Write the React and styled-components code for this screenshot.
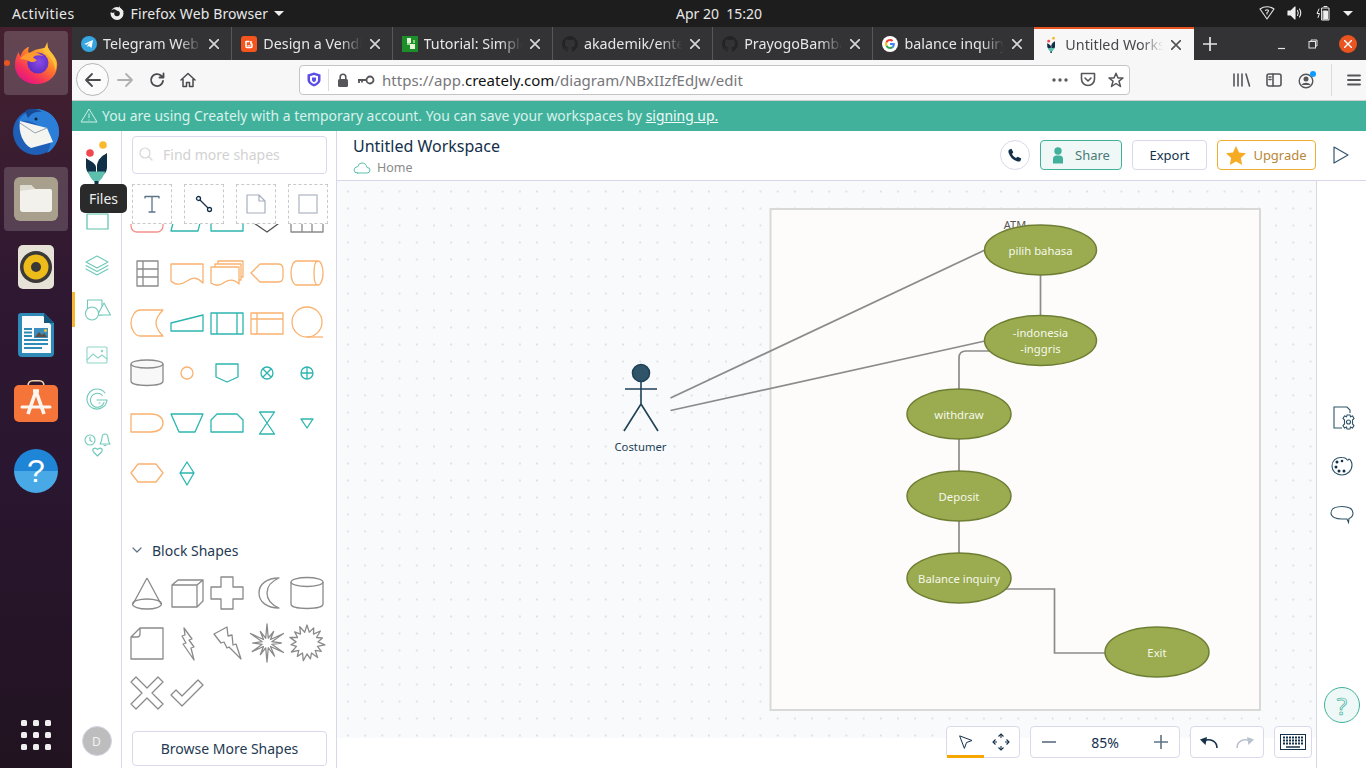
import React from "react";
import styled, { createGlobalStyle } from "styled-components";

const Global = createGlobalStyle`
  html, body { margin: 0; padding: 0; overflow: hidden; background: #fff; }
  * { box-sizing: border-box; }
  body { font-family: "Noto Sans", "Open Sans", sans-serif; }
  #root { width: 1366px; height: 768px; }
`;

const Screen = styled.div`width:1366px;height:768px;display:flex;flex-direction:column;overflow:hidden;position:relative;`;
const TopBar = styled.header`height:27px;flex:none;background:#1d1d1d;color:#e8e8e8;font-size:14px;display:flex;align-items:center;padding-bottom:1px;`;
const TopLeft = styled.div`flex:0 0 676px;display:flex;align-items:center;padding-left:12px;`;
const Activities = styled.span`letter-spacing:.42px;`;
const AppMenu = styled.div`display:flex;align-items:center;gap:6px;margin-left:34px;letter-spacing:.12px;`;
const Clock = styled.div`white-space:pre;`;
const Tray = styled.div`margin-left:auto;display:flex;align-items:center;gap:12px;padding-right:13px;`;
const Caret = styled.span`width:0;height:0;border-left:5px solid transparent;border-right:5px solid transparent;border-top:5px solid #eee;display:inline-block;margin-left:${p=>p.$gap||0}px;`;

const Body = styled.div`flex:1;display:flex;min-height:0;`;
const Dock = styled.nav`width:72px;flex:none;background:linear-gradient(180deg,#45212f 0%,#2f1831 35%,#2a1630 60%,#211320 100%);display:flex;flex-direction:column;align-items:center;padding-top:4px;`;
const DockItem = styled.div`width:64px;height:64px;margin-bottom:4px;border-radius:4px;display:flex;align-items:center;justify-content:center;position:relative;background:${p=>p.$active?"rgba(255,255,255,.17)":"transparent"};`;
const RunDot = styled.span`position:absolute;left:0;top:29px;width:6px;height:6px;margin-left:0;border-radius:50%;background:#e95420;`;
const HelpBall = styled.div`width:44px;height:44px;border-radius:50%;background:linear-gradient(180deg,#1f85d6 0,#1f85d6 50%,#48a9e6 50%,#48a9e6 100%);color:#fff;font-size:32px;line-height:44px;text-align:center;font-family:"Liberation Sans",sans-serif;`;
const AppGrid = styled.div`margin-top:auto;margin-bottom:18px;display:grid;grid-template-columns:repeat(3,6px);gap:6px;`;
const AppDot = styled.span`width:6px;height:6px;border-radius:1.5px;background:#f0eeee;`;

const Browser = styled.div`flex:1;display:flex;flex-direction:column;min-width:0;`;
const TabBar = styled.div`height:33px;flex:none;background:#333234;display:flex;align-items:stretch;color:#e7e7e7;`;
const Tab = styled.div`flex:0 0 160.3px;min-width:0;display:flex;align-items:center;padding:0 ${p=>p.$active?"13px":"12px"} 0 ${p=>p.$active?"11px":"9px"};font-size:14.3px;background:${p=>p.$active?"#f7f7f7":"transparent"};color:${p=>p.$active?"#48484c":"#e7e7e7"};border-top:${p=>p.$active?"2px solid #e95420":"none"};border-right:${p=>p.$active||p.$last?"none":"1px solid #58585a"};`;
const TabTitle = styled.span`flex:1;min-width:0;margin:0 8px 0 ${p=>p.$active?"8px":"6px"};overflow:hidden;white-space:nowrap;-webkit-mask-image:linear-gradient(90deg,#000 78%,transparent 100%);mask-image:linear-gradient(90deg,#000 78%,transparent 100%);`;
const Plus = styled.div`width:32px;display:flex;align-items:center;justify-content:center;`;
const WinBtns = styled.div`margin-left:auto;display:flex;align-items:center;gap:20px;padding-right:9px;`;
const CloseWin = styled.div`width:18px;height:18px;border-radius:50%;background:#e95420;display:flex;align-items:center;justify-content:center;`;

const NavBar = styled.div`height:41px;flex:none;background:#f7f7f7;border-bottom:1px solid #cfcfd0;display:flex;align-items:center;padding-left:4px;padding-bottom:1px;`;
const BackBtn = styled.div`width:33px;height:33px;border-radius:50%;border:1px solid #b5b5b5;background:#fbfbfb;display:flex;align-items:center;justify-content:center;`;
const NavIcon = styled.div`width:${p=>p.$w||32}px;flex:none;display:flex;align-items:center;justify-content:center;`;
const UrlBox = styled.div`width:831px;height:30px;margin-left:96px;background:#fff;border:1px solid #c5c5c7;border-radius:4px;display:flex;align-items:center;font-size:15px;color:#77777b;`;
const UrlSep = styled.span`width:1px;height:22px;background:#dddddf;margin:0 7px 0 0;`;
const UrlText = styled.div`margin-left:7px;white-space:nowrap;letter-spacing:.03px;`;
const UrlStrong = styled.span`color:#111;`;
const UrlEnd = styled.div`margin-left:auto;display:flex;align-items:center;gap:12px;padding-right:5px;`;
const ToolSet = styled.div`display:flex;align-items:center;margin-left:101px;gap:15px;`;
const ToolSep = styled.span`width:1px;height:32px;background:#dcdcdc;margin:0 0 0 -1px;`;

const Banner = styled.div`height:30px;flex:none;background:#41b19c;color:#d9f2ec;font-size:13.9px;display:flex;align-items:center;padding:0 0 1px 8px;gap:4px;`;
const SignLink = styled.span`text-decoration:underline;color:#eefaf7;`;

const AppArea = styled.div`flex:1;display:flex;min-height:0;background:#fff;position:relative;`;
const Rail = styled.aside`width:50px;flex:none;border-right:1px solid #d7d7e9;display:flex;flex-direction:column;align-items:center;position:relative;`;
const RailLogo = styled.div`height:66px;flex:none;padding-top:8px;display:flex;justify-content:center;align-items:flex-start;`;
const RailItem = styled.div`height:45px;width:100%;flex:none;display:flex;align-items:center;justify-content:center;position:relative;${p=>p.$active?"&::before{content:'';position:absolute;left:0;top:5px;bottom:5px;width:3px;background:#f7b733;}":""}`;
const Avatar = styled.div`margin-top:auto;margin-bottom:12px;width:30px;height:30px;border-radius:50%;background:#bdbdbd;border:1px solid #d5d5e5;color:#f3f3f3;font-size:12px;display:flex;align-items:center;justify-content:center;`;
const Tooltip = styled.div`position:absolute;left:8px;top:53px;width:47px;height:29px;border-radius:5px;background:#2a2a2a;color:#eee;font-size:14px;display:flex;align-items:center;justify-content:center;z-index:5;`;

const Panel = styled.aside`width:215px;flex:none;border-right:1px solid #d7d7e9;display:flex;flex-direction:column;padding-top:5px;`;
const SearchBox = styled.div`margin:0 9px 0 10px;height:38px;flex:none;border:1px solid #d9d9eb;border-radius:4px;display:flex;align-items:center;padding:0 0 2px 6px;gap:10px;color:#d2d2d2;font-size:14px;`;
const ToolRow = styled.div`margin:10px 0 0 10px;display:flex;gap:12px;flex:none;`;
const ToolBox = styled.div`width:40px;height:40px;border:1px dashed #c9c9c9;background:#fff;display:flex;align-items:center;justify-content:center;`;
const Scroller = styled.div`height:316px;flex:none;overflow:hidden;`;
const ShapeGrid = styled.div`display:grid;grid-template-columns:repeat(5,40px);grid-auto-rows:50px;padding-left:5px;margin-top:${p=>p.$offset||0}px;`;
const ShapeCell = styled.div`display:flex;align-items:center;justify-content:center;`;
const SectionHead = styled.div`height:22px;flex:none;display:flex;align-items:center;gap:10px;padding:0 0 2px 10px;font-size:14px;color:#1f3a52;`;
const BlockWrap = styled.div`margin-top:6px;height:150px;flex:none;`;
const Browse = styled.div`margin:13px 9px 0 10px;height:35px;flex:none;border:1px solid #d9d9eb;border-radius:4px;display:flex;align-items:center;justify-content:center;font-size:14px;color:#1f3a52;`;

const Main = styled.main`flex:1;display:flex;flex-direction:column;min-width:0;`;
const Header = styled.div`height:50px;flex:none;border-bottom:1px solid #d7d7e9;display:flex;align-items:center;padding:0 17px 1px 16px;`;
const TitleBlock = styled.div`display:flex;flex-direction:column;`;
const Title = styled.div`font-size:16px;line-height:22px;color:#14304a;margin-top:-1px;`;
const Crumb = styled.div`font-size:12.5px;line-height:18px;margin-top:2px;margin-bottom:-3px;color:#8a8a8a;display:flex;align-items:center;gap:6px;`;
const Actions = styled.div`margin-left:auto;display:flex;align-items:center;gap:10px;`;
const PhoneBtn = styled.div`width:30px;height:30px;border-radius:50%;border:1px solid #d9d9eb;display:flex;align-items:center;justify-content:center;`;
const HeadBtn = styled.div`height:30px;width:${p=>p.$w}px;border-radius:4px;border:1px solid ${p=>p.$border||"#d9d9eb"};background:${p=>p.$bg||"#fff"};color:${p=>p.$color||"#14304a"};font-size:13px;display:flex;align-items:center;justify-content:center;gap:${p=>p.$gap||0}px;`;
const PlayBtn = styled.div`margin-left:17px;display:flex;`;

const Work = styled.div`flex:1;display:flex;min-height:0;`;
const CanvasCol = styled.div`flex:1;position:relative;min-width:0;background:#fff;`;
const Canvas = styled.div`position:absolute;left:0;right:0;top:0;height:557px;background-color:#f9fafc;background-image:radial-gradient(circle,#dfe1ea 0.9px,transparent 1.3px);background-size:17.2px 17px;background-position:2.4px 2px;overflow:hidden;`;
const Floating = styled.div`position:absolute;right:4px;bottom:10px;display:flex;gap:10px;`;
const FloatGroup = styled.div`height:32px;width:${p=>p.$w}px;background:#fff;border:1px solid #d9d9eb;border-radius:4px;display:flex;align-items:center;justify-content:${p=>p.$spread?"space-between":"space-around"};padding:0 ${p=>p.$spread?"11px":"0"} 0 ${p=>p.$spread?"11px":`${p.$pl||0}px`};position:relative;font-size:14px;color:#14304a;`;
const ActiveMark = styled.span`position:absolute;left:0;bottom:-1px;width:37px;height:3px;background:#f7a600;`;
const RightRail = styled.aside`width:50px;flex:none;border-left:1px solid #d7d7e9;background:#fff;display:flex;flex-direction:column;align-items:center;padding-top:212px;position:relative;`;
const RightIcon = styled.div`height:${p=>p.$h||49}px;flex:none;display:flex;align-items:center;justify-content:center;margin-left:${p=>p.$shift||0}px;`;
const HelpFab = styled.div`position:absolute;left:7px;bottom:45px;width:36px;height:36px;border-radius:50%;border:1px solid #41b19c;background:#eef8f6;color:#eef8f6;-webkit-text-stroke:.7px #41b19c;display:flex;align-items:center;justify-content:center;font-size:24px;`;

const OR = "#f9b26f", TE = "#2cb5ae", GR = "#8a8a8a";
const Sh = ({ c = GR, sw = 1.3, fill = "none", children }) => (
  <svg width="40" height="40" viewBox="0 0 40 40" fill={fill} stroke={c} strokeWidth={sw} strokeLinejoin="round">{children}</svg>
);
const P = ({ d }) => <path d={d} />;
const star = (n, R, r, jitter = []) => {
  const out = [];
  for (let i = 0; i < n * 2; i++) {
    const a = (Math.PI * i) / n - Math.PI / 2;
    const rad = i % 2 === 0 ? R * (jitter[(i / 2) % jitter.length] || 1) : r;
    out.push(`${(20 + Math.cos(a) * rad).toFixed(1)},${(20 + Math.sin(a) * rad).toFixed(1)}`);
  }
  return out.join(" ");
};

const flowShapes = [
  <Sh c="#f2908a"><rect x="4" y="6" width="32" height="23" rx="6" /></Sh>,
  <Sh c={TE}><P d="M9 8H36L31 28H4Z" /></Sh>,
  <Sh c={TE}><rect x="4" y="8" width="32" height="20" /></Sh>,
  <Sh c="#555"><P d="M4 18L20 29L35 18" /></Sh>,
  <Sh c={GR}><P d="M4 6H36V29H4ZM15 6V29M25 6V29" /></Sh>,

  <Sh c={GR}><P d="M10 8H31V33H10ZM10 16H31M10 24H31M16 8V33" /></Sh>,
  <Sh c={OR}><P d="M4 11H36V30C30 24 26 24 20 28C14 32 8 32 4 28Z" /></Sh>,
  <Sh c={OR}><P d="M4 14H32V31C27 26 23 26 18 29C13 33 8 33 4 30ZM8 14V11H34V27H32M11 11V8H36V24H34" /></Sh>,
  <Sh c={OR}><P d="M4 20L13 11H31Q36 11 36 16V24Q36 29 31 29H13Z" /></Sh>,
  <Sh c={OR}><P d="M31 8H10C6 8 4 14 4 20C4 26 6 32 10 32H31M31 8C34 8 36 14 36 20C36 26 34 32 31 32C28 32 27 26 27 20C27 14 28 8 31 8" /></Sh>,

  <Sh c={OR}><P d="M13 7H36C31 12 29 16 29 20C29 24 31 28 36 33H13C8 33 4 26 4 20C4 14 8 7 13 7Z" /></Sh>,
  <Sh c={TE}><P d="M4 20L36 12V28H4Z" /></Sh>,
  <Sh c={TE}><P d="M4 10H36V31H4ZM10 10V31M30 10V31" /></Sh>,
  <Sh c={OR}><P d="M4 10H36V31H4ZM10 10V31M4 16H36" /></Sh>,
  <Sh c={OR}><circle cx="20" cy="19" r="15" /><P d="M20 34H36" /></Sh>,

  <Sh c={GR} fill="#f8f8f8"><P d="M4 11V28C4 34 36 34 36 28V11" /><ellipse cx="20" cy="11" rx="16" ry="4" /></Sh>,
  <Sh c={OR}><circle cx="20" cy="20" r="6" /></Sh>,
  <Sh c={TE}><P d="M9 11H31V24L20 29L9 24Z" /></Sh>,
  <Sh c={TE}><circle cx="20" cy="20" r="6" /><P d="M16 16L24 24M24 16L16 24" /></Sh>,
  <Sh c={TE}><circle cx="20" cy="20" r="6" /><P d="M14 20H26M20 14V26" /></Sh>,

  <Sh c={OR}><P d="M4 11H24C32 11 36 15 36 20C36 25 32 29 24 29H4Z" /></Sh>,
  <Sh c={TE}><P d="M4 11H36L28 29H12Z" /></Sh>,
  <Sh c={TE}><P d="M10 11H30L36 17V29H4V17Z" /></Sh>,
  <Sh c={TE}><P d="M12.5 9H27.5L12.5 31H27.5Z" /></Sh>,
  <Sh c={TE}><P d="M14 16H26L20 25Z" /></Sh>,

  <Sh c={OR}><P d="M11 11H29L36 20L29 29H11L4 20Z" /></Sh>,
  <Sh c={TE}><P d="M20 9L27 20L20 32L13 20ZM13 20H27" /></Sh>,
];

const blockShapes = [
  <Sh><P d="M20 5L6 31M20 5L34 31" /><ellipse cx="20" cy="31" rx="14.5" ry="5" /></Sh>,
  <Sh><P d="M5 12H30V34H5ZM5 12L11 7H36L30 12M36 7V28L30 34" /></Sh>,
  <Sh><P d="M14 4H26V14H36V26H26V36H14V26H4V14H14Z" /></Sh>,
  <Sh><P d="M32 5C20 5 12 11 12 20C12 29 20 35 32 35C25 32 20 27 20 20C20 13 25 8 32 5Z" /></Sh>,
  <Sh><ellipse cx="20" cy="9" rx="16" ry="4.5" /><P d="M4 9V31C4 37 36 37 36 31V9" /></Sh>,
  <Sh><P d="M13 5H36V36H4V14ZM4 14H10Q13 14 13 11V5" /></Sh>,
  <Sh><P d="M17 5L25 16L22 17L27 24L24 25L27 37L16 21L19 20L15 13L18 12Z" /></Sh>,
  <Sh><P d="M7 11L20 4L21 13L25 12L26 22L29 21L34 36L22 24L20 25L17 19L14 20Z" /></Sh>,
  <Sh><polygon points={star(12, 19, 5, [1, .7, 1, .75, 1, .8, 1, .7, .9, .75, 1, .7])} /></Sh>,
  <Sh><polygon points={star(15, 18, 11, [1, .92, 1, .9])} /></Sh>,
  <Sh><P d="M9 4L20 15L31 4L36 9L25 20L36 31L31 36L20 25L9 36L4 31L15 20L4 9Z" /></Sh>,
  <Sh><P d="M4 22L9 17L15 23L31 7L36 12L15 33Z" /></Sh>,
];

const Firefox = () => (
  <svg width="46" height="46" viewBox="0 0 48 48">
    <defs>
      <linearGradient id="ffa" x1=".8" y1=".1" x2=".2" y2=".95">
        <stop offset="0" stopColor="#ffd43a" /><stop offset=".4" stopColor="#ff7a2a" /><stop offset=".75" stopColor="#f5305c" /><stop offset="1" stopColor="#e31587" />
      </linearGradient>
      <radialGradient id="ffb" cx=".55" cy=".45" r=".6"><stop offset="0" stopColor="#8a4ae8" /><stop offset="1" stopColor="#5b2bc0" /></radialGradient>
    </defs>
    <path d="M36 2C35 7 37 9 40 13C44 18 47 22 46 28C45 39 36 46 25 46C12 46 2 37 2 26C2 20 4 16 6 12C6 15 7 16 8 17C9 12 13 8 17 7C15 11 16 13 17 14C22 9 31 9 33 8C35 7 35.5 4 36 2Z" fill="url(#ffa)" />
    <circle cx="26" cy="24" r="11" fill="url(#ffb)" />
    <path d="M7 20C11 15 15 13 19 13C23 12 28 14 32 17C27 15 23 16 21 18C22 20 24 20 25 21C21 24 18 23 15 21C12 20 9 20 7 20Z" fill="#ff9a2e" />
    <path d="M36 2C35 8 39 12 42 16C45 21 46 26 44 32C44 25 40 18 34 14C31 12 33 8 36 2Z" fill="#ffc13a" />
  </svg>
);
const Thunderbird = () => (
  <svg width="50" height="50" viewBox="0 0 50 50">
    <circle cx="25" cy="26" r="23" fill="#1f5fb8" />
    <path d="M7 16C12 6 24 0 34 5C43 8 49 18 48 28C47 36 42 44 36 47C40 40 40 36 38 30L28 20C20 14 13 14 7 16Z" fill="#2b7fd8" />
    <path d="M9 15L36 22L42 36L20 42C12 38 7 26 9 15Z" fill="#f4f4f0" />
    <path d="M9 17L24 27L36 22" fill="none" stroke="#9aa3ab" strokeWidth="1" />
    <path d="M14 5C18 2 25 2 31 6C24 5 20 8 17 12Z" fill="#174a94" />
    <circle cx="25" cy="13" r="1.5" fill="#123" />
  </svg>
);
const FilesIcon = () => (
  <svg width="46" height="46" viewBox="0 0 46 46">
    <rect x="1" y="1" width="44" height="44" rx="6" fill="#a8a08c" />
    <path d="M7 11Q7 9 9 9H18L22 13H37Q39 13 39 15V33Q39 36 36 36H10Q7 36 7 33Z" fill="#f3f1ec" />
    <path d="M7 15V11Q7 9 9 9H18L22 13Z" fill="#dedbd1" />
  </svg>
);
const Rhythm = () => (
  <svg width="38" height="46" viewBox="0 0 38 46">
    <rect x="1" y="1" width="36" height="44" rx="5" fill="#e6e2d7" />
    <circle cx="19" cy="23" r="16" fill="#3c3a38" />
    <circle cx="19" cy="23" r="12.5" fill="#edbb1a" />
    <circle cx="19" cy="23" r="5" fill="#3a3836" />
  </svg>
);
const Writer = () => (
  <svg width="38" height="46" viewBox="0 0 38 46">
    <path d="M4 1H27L37 11V41Q37 45 33 45H5Q1 45 1 41V4Q1 1 4 1Z" fill="#2f8ab8" />
    <path d="M5 4H26L34 13V41H5Z" fill="#fbfcfd" />
    <path d="M27 1L37 11H27Z" fill="#15587e" />
    <path d="M7 17H15M7 20.5H15M7 24H15M7 28H31M7 32H31M7 36H25" stroke="#2f8ab8" strokeWidth="1.8" />
    <rect x="17" y="16" width="14" height="10" fill="#3a8dbd" />
    <path d="M18 25L22 20L25 23L27 21L30 25Z" fill="#5a4e45" />
    <circle cx="28.5" cy="18.5" r="1.5" fill="#f4c430" />
  </svg>
);
const SoftwareIcon = () => (
  <svg width="46" height="46" viewBox="0 0 46 46">
    <path d="M15 6Q15 .8 20 .8H26Q31 .8 31 6" fill="none" stroke="#f0d0a8" strokeWidth="1.6" />
    <rect x="1" y="5" width="44" height="37" rx="5" fill="#f4743a" />
    <path d="M23 11L15 34M23 11L31 34M20 11H26" stroke="#fdf5f0" strokeWidth="3.6" fill="none" />
    <path d="M9 27H37" stroke="#fdf5f0" strokeWidth="3" strokeLinecap="round" />
  </svg>
);
const Telegram = () => (
  <svg width="16" height="16" viewBox="0 0 16 16" style={{ flex: "none" }}><circle cx="8" cy="8" r="8" fill="#37a5e0" /><path d="M3 8L12 4L10.5 12L8 10L6.5 11L6.5 9L10 6L5.5 8.8Z" fill="#fff" /></svg>
);
const Blogger = () => (
  <svg width="16" height="16" viewBox="0 0 16 16" style={{ flex: "none" }}><rect width="16" height="16" rx="3" fill="#f4541d" /><path d="M5 5.5H8.5M5 5V10.5Q5 11.5 6 11.5H10Q11 11.5 11 10.5V8.5Q11 7.5 10 7.5V5" stroke="#fff" strokeWidth="1.6" fill="none" /><path d="M6.5 9.8H9.5" stroke="#fff" /></svg>
);
const Sheet = () => (
  <svg width="16" height="16" viewBox="0 0 16 16" style={{ flex: "none" }}><rect width="16" height="16" fill="#1c8f2a" /><rect x="5" y="2" width="4" height="5" fill="#e8f5d8" /><rect x="8" y="8" width="5" height="5" fill="#e8f5d8" /><rect x="5" y="7" width="3" height="2" fill="#9ed68a" /><rect x="11" y="4" width="2" height="3" fill="#8fd07a" /></svg>
);
const Github = () => (
  <svg width="16" height="16" viewBox="0 0 16 16" fill="#242426" style={{ flex: "none" }}><path d="M8 0a8 8 0 0 0-2.5 15.6c.4.1.5-.2.5-.4v-1.4c-2.2.5-2.7-1-2.7-1-.4-.9-.9-1.2-.9-1.2-.7-.5.1-.5.1-.5.8.1 1.2.8 1.2.8.7 1.2 1.9.9 2.3.7.1-.5.3-.9.5-1.1-1.8-.2-3.6-.9-3.6-4 0-.9.3-1.6.8-2.1-.1-.2-.4-1 .1-2.1 0 0 .7-.2 2.2.8a7.6 7.6 0 0 1 4 0c1.5-1 2.2-.8 2.2-.8.4 1.1.2 1.9.1 2.1.5.6.8 1.3.8 2.1 0 3.1-1.9 3.7-3.7 3.9.3.3.6.8.6 1.5v2.2c0 .2.1.5.6.4A8 8 0 0 0 8 0z" /></svg>
);
const Google = () => (
  <svg width="16" height="16" viewBox="0 0 16 16" style={{ flex: "none" }}>
    <circle cx="8" cy="8" r="8" fill="#fff" />
    <path d="M12.8 8.1c0-.4 0-.7-.1-1H8v2h2.7c-.1.7-.5 1.2-1 1.6l1.6 1.2c1-.9 1.5-2.2 1.5-3.8z" fill="#4285f4" />
    <path d="M8 13c1.3 0 2.4-.4 3.3-1.2l-1.6-1.2c-.4.3-1 .5-1.7.5-1.3 0-2.4-.9-2.8-2L3.6 10.3C4.4 11.9 6.1 13 8 13z" fill="#34a853" />
    <path d="M5.2 9.1c-.2-.7-.2-1.5 0-2.2L3.6 5.700c-.7 1.400-.7 3.200 0 4.600z" fill="#fbbc05" />
    <path d="M8 5c.7 0 1.400.2 1.900.7l1.400-1.400C10.400 3.500 9.300 3 8 3 6.100 3 4.400 4.100 3.600 5.700l1.600 1.200C5.600 5.900 6.700 5 8 5z" fill="#ea4335" />
  </svg>
);
const CreatelyLogo = ({ s = 1 }) => (
  <svg width={34 * s} height={46 * s} viewBox="0 0 34 46" style={{ flex: "none" }}>
    <circle cx="23" cy="6" r="3.8" fill="#f9b92f" />
    <circle cx="10" cy="14" r="3.8" fill="#ef4850" />
    <path d="M6 19C9 22 15 23 16 28V36H10C8 34 6 31 6 28Z" fill="#112f47" />
    <path d="M27 14V28C27 33 24 36 21 36H17V26C18 20 22 17 27 14Z" fill="#112f47" />
    <path d="M8 32.5H25C24 37 20 43 17 43H16C13 43 9 37 8 32.5Z" fill="#5cc0ac" />
    <path d="M14.5 42H18.5V46H14.5Z" fill="#112f47" />
  </svg>
);
const Ic = ({ w = 18, h = 18, vb, sw = 1.6, c = "#555", fill = "none", children }) => (
  <svg width={w} height={h} viewBox={vb || `0 0 ${w} ${h}`} fill={fill} stroke={c} strokeWidth={sw} strokeLinecap="round" strokeLinejoin="round">{children}</svg>
);
const Close = ({ c = "#d6d6d6", s = 10 }) => (
  <svg width={s} height={s} viewBox="0 0 10 10" stroke={c} strokeWidth="1.7" style={{ flex: "none" }}><path d="M0 0L10 10M10 0L0 10" /></svg>
);

const tabs = [
  { icon: <Telegram />, title: "Telegram Web" },
  { icon: <Blogger />, title: "Design a Vending Machine" },
  { icon: <Sheet />, title: "Tutorial: Simple Example" },
  { icon: <Github />, title: "akademik/enterprise" },
  { icon: <Github />, title: "PrayogoBambang" },
  { icon: <Google />, title: "balance inquiry - Google" },
  { icon: <CreatelyLogo s={0.37} />, title: "Untitled Workspace", active: true },
];

const Diagram = () => {
  const nodes = [
    { cx: 1040.5, cy: 250, rx: 56, t: ["pilih bahasa"] },
    { cx: 1040.5, cy: 340.5, rx: 56, t: ["-indonesia", "-inggris"] },
    { cx: 959, cy: 414, rx: 52, t: ["withdraw"] },
    { cx: 959, cy: 496, rx: 52, t: ["Deposit"] },
    { cx: 959, cy: 578, rx: 52, t: ["Balance inquiry"] },
    { cx: 1157, cy: 652, rx: 52, t: ["Exit"] },
  ];
  return (
    <svg width="979" height="557" viewBox="337 181 979 557" style={{ display: "block" }} fontFamily="'Noto Sans',sans-serif">
      <rect x="770.5" y="209" width="489.5" height="501" fill="#fdfcfb" stroke="#d9d9d7" strokeWidth="2" />
      <text x="1015" y="229" fontSize="11" fill="#555" textAnchor="middle">ATM</text>
      <g stroke="#8b8b8b" strokeWidth="1.7" fill="none">
        <path d="M670.5 398L985 250" />
        <path d="M670.5 410.5L985 341" />
        <path d="M1040.5 275V316" />
        <path d="M992 351H966Q959 351 959 358V389" />
        <path d="M959 439V471M959 521V553" />
        <path d="M1003 589H1054.5V653H1105" />
      </g>
      {nodes.map((n) => (
        <g key={n.t[0]}>
          <ellipse cx={n.cx} cy={n.cy} rx={n.rx} ry="25" fill="#9aab50" stroke="#6e7e33" strokeWidth="1.5" />
          {n.t.map((line, i) => (
            <text key={line} x={n.cx} y={n.cy + 4 + (n.t.length > 1 ? (i === 0 ? -8 : 8) : 1)} fontSize="11.3" fill="#f6f8ea" textAnchor="middle">{line}</text>
          ))}
        </g>
      ))}
      <g stroke="#1f4257" strokeWidth="1.6" fill="none">
        <circle cx="641" cy="373" r="8.5" fill="#2f5468" />
        <path d="M625 389H657M641 382V404M641 404L624 431M641 404L658 431" />
      </g>
      <text x="640.5" y="451" fontSize="11.3" fill="#1f4257" textAnchor="middle">Costumer</text>
    </svg>
  );
};

export default function App() {
  return (
    <Screen>
      <Global />
      <TopBar>
        <TopLeft>
          <Activities>Activities</Activities>
          <AppMenu>
            <svg width="16" height="16" viewBox="0 0 16 16"><circle cx="8" cy="8.5" r="6.5" fill="#eee" /><circle cx="8" cy="8.5" r="2.8" fill="#1d1d1d" /><path d="M1 7C3 3 6 4 8 5.5L4 8Z" fill="#1d1d1d" /><path d="M10 0C10 3 13 4 15 7L10 5Z" fill="#eee" /></svg>
            Firefox Web Browser
            <Caret $gap={0} />
          </AppMenu>
        </TopLeft>
        <Clock>Apr 20  15:20</Clock>
        <Tray>
          <Ic w={16} h={14} c="#e5e5e5" sw={1.1}><path d="M1 3C5 0 11 0 15 3L8 13Z" /><path d="M6.5 4.5Q8 3 9.5 4.5Q9.5 6 8 6.5V8" /></Ic>
          <Ic w={16} h={14} c="#eee" sw={1.1}><path d="M1 5H4L8 1V13L4 9H1Z" fill="#eee" /><path d="M10.5 4.5Q12 7 10.5 9.5M12.5 3Q15 7 12.5 11" /></Ic>
          <Ic w={16} h={16} c="#eee" sw={1}><path d="M7 3H14V15H7Z" fill="#222" /><path d="M9 1.5H12" /><rect x="8.5" y="6" width="4" height="8" fill="#eee" /><path d="M4 4L2 8.5H4.5L3 12.5" /></Ic>
          <Caret />
        </Tray>
      </TopBar>
      <Body>
        <Dock>
          <DockItem $active><RunDot /><Firefox /></DockItem>
          <DockItem><Thunderbird /></DockItem>
          <DockItem $active><FilesIcon /></DockItem>
          <DockItem><Rhythm /></DockItem>
          <DockItem><Writer /></DockItem>
          <DockItem><SoftwareIcon /></DockItem>
          <DockItem><HelpBall>?</HelpBall></DockItem>
          <AppGrid>{Array.from({ length: 9 }, (_, i) => <AppDot key={i} />)}</AppGrid>
        </Dock>
        <Browser>
          <TabBar>
            {tabs.map((t, i) => (
              <Tab key={t.title} $active={t.active} $last={i === 5}>
                {t.icon}
                <TabTitle $active={t.active}>{t.title}</TabTitle>
                <Close c={t.active ? "#555" : "#d6d6d6"} />
              </Tab>
            ))}
            <Plus><svg width="14" height="14" viewBox="0 0 14 14" stroke="#e5e5e5" strokeWidth="1.7"><path d="M7 0V14M0 7H14" /></svg></Plus>
            <WinBtns>
              <svg width="12" height="12" viewBox="0 0 12 12" stroke="#e5e5e5" strokeWidth="1.2"><path d="M3 10.5H10" /></svg>
              <svg width="12" height="12" viewBox="0 0 12 12" stroke="#e5e5e5" fill="none"><rect x="2" y="3.5" width="6.5" height="6.5" /><path d="M4 3.5V2H10V8H8.5" /></svg>
              <CloseWin><Close c="#fff" s={8} /></CloseWin>
            </WinBtns>
          </TabBar>
          <NavBar>
            <BackBtn>
              <Ic w={18} h={16} c="#4a4a4f" sw={1.8}><path d="M16 8H2M8 2L2 8L8 14" /></Ic>
            </BackBtn>
            <NavIcon $w={32}><Ic w={18} h={16} c="#b0b0b2" sw={1.8}><path d="M2 8H16M10 2L16 8L10 14" /></Ic></NavIcon>
            <NavIcon $w={32}><Ic w={16} h={16} c="#4a4a4f" sw={1.8}><path d="M14 9A6 6 0 1 1 12 3.5L14.5 5.5M14.5 1.5V5.5H10.5" /></Ic></NavIcon>
            <NavIcon $w={30}><Ic w={16} h={16} c="#4a4a4f" sw={1.5}><path d="M1 8L8 1.5L15 8M3 7V14.5H6.5V10.5H9.5V14.5H13V7" /></Ic></NavIcon>
            <UrlBox>
              <NavIcon $w={28}><svg width="14" height="15" viewBox="0 0 14 15"><path d="M7 0.5L13.5 2.5V8C13.5 11 10 13.5 7 14.5C4 13.5 .5 11 .5 8V2.5Z" fill="#5a4ee6" /><path d="M7 3L11 4.2V8C11 10 8.5 11.5 7 12C5.5 11.5 3 10 3 8V4.2Z" fill="#fff" /><path d="M5 5.5H9V8C9 9 8 9.8 7 10.2C6 9.8 5 9 5 8Z" fill="#5a4ee6" /></svg></NavIcon>
              <UrlSep />
              <svg width="14" height="14" viewBox="0 0 14 14"><rect x="2" y="6" width="10" height="8" rx="1.5" fill="#55555a" /><path d="M4.2 6V4a2.8 2.8 0 0 1 5.600 0V6" fill="none" stroke="#55555a" strokeWidth="1.6" /></svg>
              <svg width="18" height="10" viewBox="0 0 18 10" style={{ marginLeft: 7 }}><circle cx="13" cy="5" r="3.5" fill="none" stroke="#55555a" strokeWidth="1.8" /><path d="M9 5H1M2 5V8M5 5V7.5" stroke="#55555a" strokeWidth="1.8" /></svg>
              <UrlText>https://app.<UrlStrong>creately.com</UrlStrong>/diagram/NBxIIzfEdJw/edit</UrlText>
              <UrlEnd>
                <svg width="16" height="4" viewBox="0 0 16 4" fill="#5a5a5f"><circle cx="2" cy="2" r="1.7" /><circle cx="8" cy="2" r="1.7" /><circle cx="14" cy="2" r="1.7" /></svg>
                <Ic w={16} h={15} c="#55555a" sw={1.6}><path d="M1.5 1.5H14.5V7A6.5 6.5 0 0 1 1.5 7ZM5 6L8 9L11 6" /></Ic>
                <Ic w={16} h={16} c="#55555a" sw={1.5}><path d="M8 1.2L10 6H15L11 9.2L12.5 14.5L8 11.5L3.5 14.5L5 9.2L1 6H6Z" /></Ic>
              </UrlEnd>
            </UrlBox>
            <ToolSet>
              <Ic w={20} h={16} c="#55555a" sw={1.6}><path d="M3 2V14M7 2V14M11 2V14M15 2L18.5 14" /></Ic>
              <Ic w={16} h={14} c="#55555a" sw={1.6}><rect x="1" y="1" width="14" height="12" rx="2" /><path d="M7 1V13" /><path d="M3 4H5M3 6.5H5" /></Ic>
              <svg width="20" height="18" viewBox="0 0 20 18"><circle cx="9" cy="10" r="6.8" fill="none" stroke="#55555a" strokeWidth="1.4" /><circle cx="9" cy="8" r="2.5" fill="#55555a" /><path d="M4.5 14C6 11 12 11 13.5 14Z" fill="#55555a" /><circle cx="16" cy="3" r="3" fill="#0a9dff" /></svg>
              <ToolSep />
              <Ic w={14} h={14} c="#55555a" sw={1.8}><path d="M1 2.5H13M1 7H13M1 11.5H13" /></Ic>
            </ToolSet>
          </NavBar>
          <Banner>
            <svg width="18" height="15" viewBox="0 0 18 15" fill="none" stroke="#cdeee6" strokeWidth="1"><path d="M9 1L17 14H1Z" /><path d="M9 5.5V10M9 11.5V12.5" /></svg>
            <span>You are using Creately with a temporary account. You can save your workspaces by <SignLink>signing up.</SignLink></span>
          </Banner>
          <AppArea>
            <Rail>
              <RailLogo><CreatelyLogo /></RailLogo>
              <RailItem>
                <Ic w={24} h={20} c="#5cc0ac" sw={1.2}><path d="M2 4H23V19H2Z" /></Ic>
              </RailItem>
              <RailItem>
                <Ic w={24} h={22} c="#6fc9b8" sw={1.1}><path d="M12 2L23 8L12 14L1 8ZM1 11.5L12 17.5L23 11.5M1 15L12 21L23 15" /></Ic>
              </RailItem>
              <RailItem $active>
                <Ic w={28} h={22} c="#6fc9b8" sw={1.1}><rect x="4.5" y="1" width="14.5" height="15" /><path d="M21 4L27.5 16H14.5Z" fill="#fff" /><circle cx="9" cy="14.5" r="6.5" fill="#fff" /></Ic>
              </RailItem>
              <RailItem>
                <Ic w={24} h={20} c="#8fd5c8" sw={1.1}><rect x="2" y="2" width="20" height="16" rx="1" /><path d="M2 15L8 9L13 13L17 10L22 14" /><circle cx="17" cy="6" r=".7" /></Ic>
              </RailItem>
              <RailItem>
                <Ic w={24} h={24} c="#6fc9b8" sw={1.1}><path d="M20 5A10 10 0 1 0 22 12H12M17.5 7.5A7 7 0 1 0 19 14.5M14 15H15" /></Ic>
              </RailItem>
              <RailItem>
                <Ic w={28} h={26} c="#6fc9b8" sw={1.1}>
                  <circle cx="7" cy="8" r="5" /><path d="M7 5V8.5L9 9.5" />
                  <path d="M17 12Q19 9 19 6Q19 2 22 2Q25 2 25 6Q25 9 27 12ZM21 13.5H23" />
                  <path d="M14.5 24L10.5 20Q9 18 10.5 16.5Q12.5 15.5 14.5 17.5Q16.5 15.5 18.5 16.5Q20 18 18.5 20Z" />
                </Ic>
              </RailItem>
              <Avatar>D</Avatar>
              <Tooltip>Files</Tooltip>
            </Rail>
            <Panel>
              <SearchBox>
                <Ic w={14} h={14} c="#d6d6d6" sw={1.2}><circle cx="6" cy="6" r="5" /><path d="M10 10L13 13" /></Ic>
                Find more shapes
              </SearchBox>
              <ToolRow>
                <ToolBox><Ic w={20} h={20} c="#5d7488" sw={1.3}><path d="M3 4V2.5H17V4M10 2.5V18M7 18H13" /></Ic></ToolBox>
                <ToolBox><svg width="18" height="18" viewBox="0 0 18 18" fill="#fff" stroke="#14304a" strokeWidth="1.3"><path d="M4 4L14 14" /><circle cx="3.5" cy="3.5" r="2" /><circle cx="14.5" cy="14.5" r="2" /></svg></ToolBox>
                <ToolBox><Ic w={20} h={20} c="#a7aebd" sw={1.2}><path d="M1 1H13L19 7V19H1ZM13 1V7H19" /></Ic></ToolBox>
                <ToolBox><svg width="20" height="20" viewBox="0 0 20 20" fill="none" stroke="#bcc2ce" strokeWidth="1.5"><rect x="1" y="1" width="18" height="18" /></svg></ToolBox>
              </ToolRow>
              <Scroller>
                <ShapeGrid $offset={-26}>
                  {flowShapes.map((s, i) => <ShapeCell key={i}>{s}</ShapeCell>)}
                </ShapeGrid>
              </Scroller>
              <SectionHead>
                <Ic w={10} h={6} c="#5d7488" sw={1.2}><path d="M1 1L5 5L9 1" /></Ic>
                Block Shapes
              </SectionHead>
              <BlockWrap>
                <ShapeGrid>
                  {blockShapes.map((s, i) => <ShapeCell key={i}>{s}</ShapeCell>)}
                </ShapeGrid>
              </BlockWrap>
              <Browse>Browse More Shapes</Browse>
            </Panel>
            <Main>
              <Header>
                <TitleBlock>
                  <Title>Untitled Workspace</Title>
                  <Crumb>
                    <Ic w={18} h={12} c="#5cc0ac" sw={1}><path d="M4.5 11H14Q17 11 17 8Q17 5.5 14 5.5Q13 1 9 1Q5.5 1 5 4.5Q1 5 1 8Q1 11 4.5 11Z" /></Ic>
                    Home
                  </Crumb>
                </TitleBlock>
                <Actions>
                  <PhoneBtn>
                    <svg width="16" height="16" viewBox="0 0 24 24" fill="#14304a"><path d="M6.6 2.5L9.5 8L7.5 10.5C8.5 13 11 15.5 13.5 16.5L16 14.5L21.5 17.4L20 21C19 22 17 22 15 21.5C9 19.5 4.5 15 2.5 9C2 7 2 5 3 4Z" /></svg>
                  </PhoneBtn>
                  <HeadBtn $w={82} $border="#41b19c" $bg="#eff8f6" $color="#4a7a78" $gap={11}>
                    <svg width="12" height="17" viewBox="0 0 12 17" fill="#41b19c"><circle cx="6" cy="4" r="3.7" /><path d="M1 16.5V12Q1 8.5 4.5 8.5H7.5Q11 8.500 11 12V16.500Z" /></svg>
                    Share
                  </HeadBtn>
                  <HeadBtn $w={75}>Export</HeadBtn>
                  <HeadBtn $w={99} $border="#f2ad33" $color="#b9873a" $gap={7}>
                    <svg width="20" height="19" viewBox="0 0 20 19" fill="#f5ab24"><path d="M10 0L13 6.5L20 7.3L14.8 12L16.2 19L10 15.5L3.8 19L5.2 12L0 7.3L7 6.5Z" /></svg>
                    Upgrade
                  </HeadBtn>
                </Actions>
                <PlayBtn><Ic w={16} h={18} c="#36566e" sw={1.2}><path d="M1 1L15 9L1 17Z" /></Ic></PlayBtn>
              </Header>
              <Work>
                <CanvasCol>
                  <Canvas><Diagram /></Canvas>
                  <Floating>
                    <FloatGroup $w={74} $pl={3}>
                      <Ic w={14} h={14} c="#14304a" sw={1}><path d="M1 1L13 5.5L7.5 7.5L5.5 13Z" /></Ic>
                      <svg width="18" height="18" viewBox="0 0 18 18" fill="none" stroke="#14304a" strokeWidth="1.1"><path d="M9 1V17M1 9H17" strokeDasharray="4 8" /><path d="M6.5 3.5L9 1L11.5 3.5M6.5 14.5L9 17L11.5 14.5M3.5 6.5L1 9L3.5 11.5M14.5 6.5L17 9L14.5 11.5" /></svg>
                      <ActiveMark />
                    </FloatGroup>
                    <FloatGroup $w={150} $spread>
                      <svg width="14" height="2" viewBox="0 0 14 2"><rect width="14" height="2" fill="#7d8a99" /></svg>
                      85%
                      <svg width="14" height="14" viewBox="0 0 14 14" stroke="#5d7488" strokeWidth="1.6"><path d="M7 0V14M0 7H14" /></svg>
                    </FloatGroup>
                    <FloatGroup $w={74}>
                      <svg width="20" height="14" viewBox="0 0 20 14" fill="none" stroke="#14304a" strokeWidth="1.6"><path d="M18 13C18 6 11 3 5 6" /><path d="M1 4.5L8 2L6.5 10Z" fill="#14304a" stroke="none" /></svg>
                      <svg width="20" height="14" viewBox="0 0 20 14" fill="none" stroke="#b9c2cf" strokeWidth="1.6"><path d="M2 13C2 6 9 3 15 6" /><path d="M19 4.5L12 2L13.5 10Z" fill="#b9c2cf" stroke="none" /></svg>
                    </FloatGroup>
                    <FloatGroup $w={38}>
                      <svg width="26" height="16" viewBox="0 0 26 16"><rect x=".5" y=".5" width="25" height="15" fill="#fff" stroke="#14304a" /><path d="M3 3.5H23M3 6.5H23M3 9.5H23" stroke="#14304a" strokeWidth="2" strokeDasharray="2 1" /><path d="M6 13H20" stroke="#14304a" strokeWidth="1.5" /></svg>
                    </FloatGroup>
                  </Floating>
                </CanvasCol>
                <RightRail>
                  <RightIcon $shift={4}>
                    <svg width="24" height="24" viewBox="0 0 24 24" fill="none" stroke="#2f5468" strokeWidth="1.1"><path d="M10 22H2V1H15L18 4V7" /><circle cx="16.5" cy="16" r="2" /><path d="M15 9H18L18.5 10.8L20.5 10L22 12.5L20.5 14V18L22 19.5L20.5 22L18.5 21L18 23H15L14.5 21L12.5 22L11 19.5L12.5 18V14L11 12.5L12.5 10L14.5 10.8Z" /></svg>
                  </RightIcon>
                  <RightIcon $h={47}>
                    <svg width="22" height="20" viewBox="0 0 22 20" fill="none" stroke="#2f5468" strokeWidth="1.1"><path d="M11 1.5C5 1 1 5 1 10C1 15 5 19 11 19C16 19 21 15 21 9C21 6 19 3 18 3C17 5 16 4 15 2.5C14 2 12.5 1.5 11 1.5Z" /><g fill="#14304a" stroke="none"><circle cx="6" cy="6" r="1.5" /><circle cx="11" cy="5" r="1.3" /><circle cx="5" cy="11" r="1.5" /><circle cx="8" cy="15" r="1.5" /><circle cx="13" cy="15" r="1.5" /></g></svg>
                  </RightIcon>
                  <RightIcon $h={52}>
                    <svg width="24" height="20" viewBox="0 0 24 20" fill="none" stroke="#2f5468" strokeWidth="1.1"><path d="M12 1.5C6 1.5 1 3.5 1 8C1 12 6 14 12 14H17L18.5 17.5L19 13.5C21.5 12.5 23 10.5 23 8C23 3.5 18 1.5 12 1.5Z" /></svg>
                  </RightIcon>
                  <HelpFab>?</HelpFab>
                </RightRail>
              </Work>
            </Main>
          </AppArea>
        </Browser>
      </Body>
    </Screen>
  );
}
